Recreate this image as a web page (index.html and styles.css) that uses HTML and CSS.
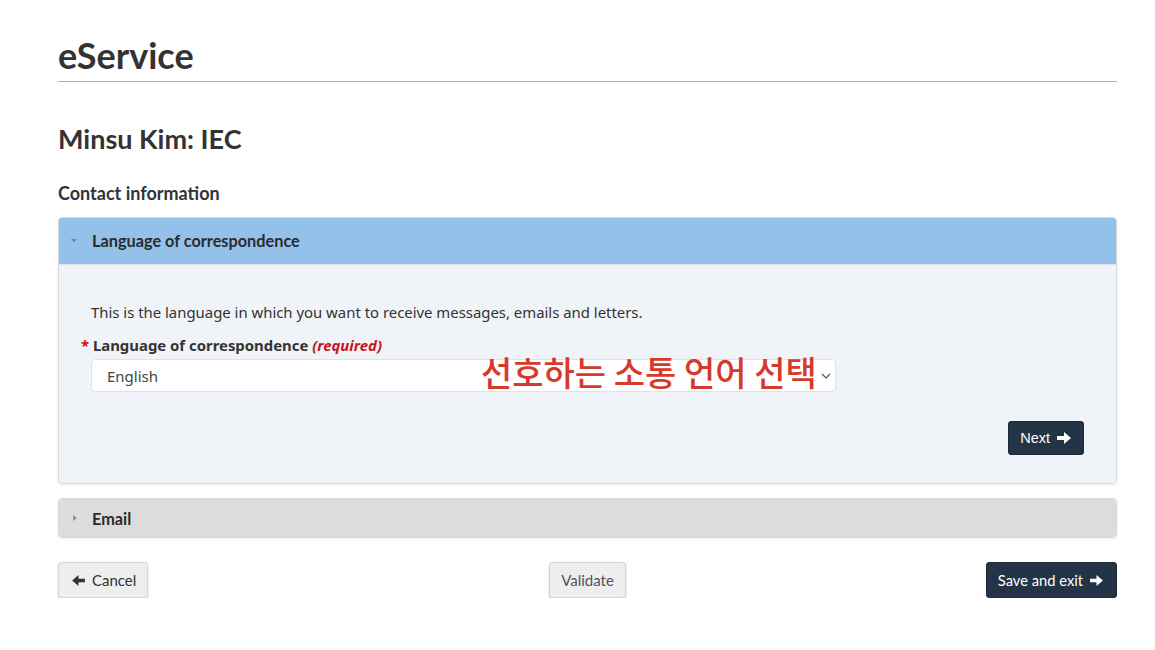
FILE: index.html
```html
<!DOCTYPE html>
<html lang="en">
<head>
<meta charset="utf-8">
<title>eService</title>
<link rel="stylesheet" href="styles.css">
</head>
<body>
<div class="page">
  <h1 class="site-title">eService</h1>
  <h2 class="person">Minsu Kim: IEC</h2>
  <h3 class="section">Contact information</h3>

  <div class="panel panel-open">
    <div class="panel-head">
      <span class="caret caret-down"></span>
      <span class="panel-title">Language of correspondence</span>
    </div>
    <div class="panel-body">
      <p class="help">This is the language in which you want to receive messages, emails and letters.</p>
      <div class="field">
        <div class="label"><span class="star">*</span> Language of correspondence <em class="req">(required)</em></div>
        <div class="select">
          <span class="select-value">English</span>
          <svg class="chev" width="10" height="6" viewBox="0 0 10 6"><path d="M1 1l4 4 4-4" fill="none" stroke="#555" stroke-width="1.2"/></svg>
          <span class="annot">선호하는 소통 언어 선택</span>
        </div>
      </div>
      <div class="next-row">
        <button class="btn btn-dark btn-next">Next <svg class="arr" width="14" height="12" viewBox="0 0 14 12"><path d="M0 4h7V0l7 6-7 6V8H0z" fill="#fff"/></svg></button>
      </div>
    </div>
  </div>

  <div class="panel panel-closed">
    <div class="panel-head">
      <span class="caret caret-right"></span>
      <span class="panel-title">Email</span>
    </div>
  </div>

  <div class="actions">
    <div class="act-left">
      <button class="btn btn-light btn-cancel"><svg class="arr" width="13" height="11" viewBox="0 0 14 12"><path d="M14 4H7V0L0 6l7 6V8h7z" fill="#333"/></svg> Cancel</button>
    </div>
    <div class="act-mid">
      <button class="btn btn-light btn-validate">Validate</button>
    </div>
    <div class="act-right">
      <button class="btn btn-dark btn-save">Save and exit <svg class="arr" width="13" height="11" viewBox="0 0 14 12"><path d="M0 4h7V0l7 6-7 6V8H0z" fill="#fff"/></svg></button>
    </div>
  </div>
</div>
</body>
</html>
```

FILE: styles.css
```css
* { box-sizing: border-box; }
body {
  margin: 0;
  background: #fff;
  font-family: Lato, "Liberation Sans", sans-serif;
  color: #333;
}
.page {
  width: 1059px;
  margin-left: 58px;
}
.site-title {
  margin: 0;
  padding-top: 35px;
  height: 82px;
  font-size: 36px;
  line-height: 40px;
  font-weight: 700;
  color: #333;
  border-bottom: 1px solid #d3a0a6;
}
.person {
  margin: 0;
  padding-top: 41px;
  font-size: 27px;
  line-height: 32px;
  font-weight: 700;
  color: #333;
}
.section {
  margin: 0;
  padding-top: 27px;
  font-size: 18px;
  line-height: 22px;
  font-weight: 700;
  color: #333;
}
.panel {
  border-radius: 4px;
  border: 1px solid #d6d9dd;
  box-shadow: 0 1px 3px rgba(0,0,0,0.08);
  overflow: hidden;
}
.panel-open { margin-top: 13px; }
.panel-closed { margin-top: 14px; }
.panel-head {
  display: flex;
  align-items: center;
  padding-left: 12px;
}
.panel-open .panel-head {
  height: 47px;
  background: #94c1e9;
  border-bottom: 1px solid #dde3ea;
  padding-bottom: 2px;
}
.panel-closed .panel-head {
  height: 38px;
  background: #dcdcdc;
}
.caret {
  width: 0;
  height: 0;
  margin-right: 15px;
}
.caret-down {
  border-left: 3px solid transparent;
  border-right: 3px solid transparent;
  border-top: 3px solid #6f7f8e;
}
.caret-right {
  border-top: 3px solid transparent;
  border-bottom: 3px solid transparent;
  border-left: 4px solid #7d96b0;
  margin-left: 2px;
  margin-right: 15px;
}
.panel-title {
  font-size: 16.3px;
  font-weight: 700;
  color: #2b2b2b;
}
.panel-body {
  background: #f0f3f7;
  padding: 37px 32px 28px 32px;
}
.help {
  margin: 0;
  font-family: "Noto Sans", "Open Sans", sans-serif;
  font-size: 14.9px;
  line-height: 20px;
  color: #333;
}
.field { margin-top: 13px; }
.label {
  font-family: "Noto Sans", "Open Sans", sans-serif;
  font-size: 14.9px;
  line-height: 20px;
  font-weight: 700;
  color: #333;
  margin-left: -10px;
}
.star { color: #d3080c; }
.req { color: #c8161d; font-weight: 700; }
.select {
  position: relative;
  margin-top: 4px;
  width: 745px;
  height: 33px;
  background: #fff;
  border: 1px solid #dfe2e6;
  border-radius: 4px;
  display: flex;
  align-items: center;
  padding-left: 15px;
}
.select-value {
  font-family: "Noto Sans", "Open Sans", sans-serif;
  font-size: 15px;
  color: #444;
  flex: 1;
}
.chev { margin-right: 4px; }
.annot {
  position: absolute;
  left: 389px;
  top: -10px;
  font-family: "Noto Sans CJK KR", sans-serif;
  font-size: 34px;
  line-height: 44px;
  font-weight: 500;
  color: #d63a2d;
  white-space: nowrap;
}
.next-row {
  display: flex;
  justify-content: flex-end;
  margin-top: 29px;
}
.btn {
  display: inline-flex;
  align-items: center;
  gap: 8px;
  border-radius: 3px;
  cursor: pointer;
}
.btn-dark {
  background: #243447;
  color: #fff;
  border: 1px solid #1c2a3a;
}
.btn-next {
  height: 34px;
  padding: 0 12px 0 11px;
  font-family: "Liberation Sans", Arial, sans-serif;
  font-size: 14.5px;
  gap: 7px;
}
.actions {
  display: grid;
  grid-template-columns: 1fr auto 1fr;
  align-items: center;
  margin-top: 24px;
}
.act-mid { display: flex; justify-content: center; }
.act-right { display: flex; justify-content: flex-end; }
.btn-light {
  background: #eeeeee;
  color: #333;
  border: 1px solid #d6d6d6;
  box-shadow: 0 1px 2px rgba(0,0,0,0.2);
  height: 36px;
  font-family: Lato, sans-serif;
  font-size: 15px;
}
.btn-cancel { padding: 0 11px 0 13px; gap: 7px; }
.btn-validate { padding: 0 11px; color: #4a5560; }
.btn-save {
  height: 36px;
  padding: 0 13px 0 11px;
  font-family: Lato, sans-serif;
  font-size: 14.7px;
  gap: 7px;
}
```
